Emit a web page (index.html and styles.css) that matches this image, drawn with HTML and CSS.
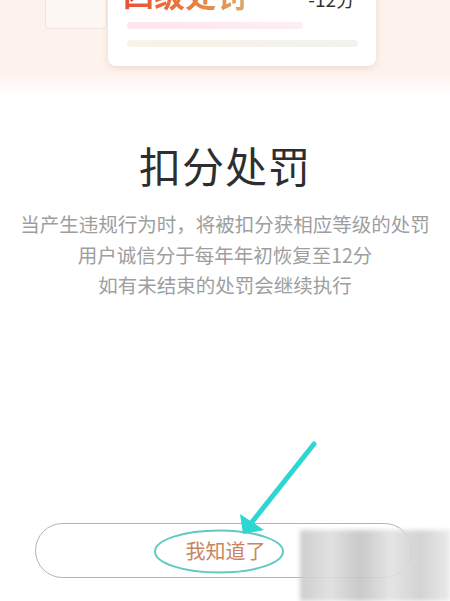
FILE: index.html
```html
<!DOCTYPE html>
<html lang="zh">
<head>
<meta charset="utf-8">
<link rel="stylesheet" href="styles.css">
</head>
<body>
<div class="page">
  <div class="top">
    <div class="ghost"></div>
    <div class="card">
      <div class="card-head">
        <span class="level">四级处罚</span>
        <span class="points">-12分</span>
      </div>
      <div class="bar bar-pink"></div>
      <div class="bar bar-light"></div>
    </div>
  </div>
  <div class="main">
    <h1 class="title">扣分处罚</h1>
    <div class="desc">
      <p>当产生违规行为时，将被扣分获相应等级的处罚</p>
      <p>用户诚信分于每年年初恢复至12分</p>
      <p>如有未结束的处罚会继续执行</p>
    </div>
    <div class="btn-row">
      <button class="btn">我知道了</button>
    </div>
  </div>
  <svg class="annot" width="450" height="601" viewBox="0 0 450 601">
    <ellipse cx="219" cy="551.5" rx="64" ry="21" fill="none" stroke="#62c8c2" stroke-width="2"/>
    <line x1="314" y1="444" x2="252" y2="522" stroke="#2ed6d2" stroke-width="5" stroke-linecap="round"/>
    <polygon points="243,534 240,514 264,530" fill="#2ed6d2"/>
  </svg>
  <div class="wm"></div>
</div>
</body>
</html>
```

FILE: styles.css
```css
html, body {
  margin: 0;
  padding: 0;
  background: #fff;
}
body {
  font-family: "Noto Sans CJK SC", "Noto Sans", sans-serif;
}
.page {
  position: relative;
  width: 450px;
  height: 601px;
  overflow: hidden;
}
.top {
  position: relative;
  display: flex;
  align-items: flex-start;
  height: 100px;
  background: linear-gradient(#fdf3ec 0, #fdf3ec 72%, #fffafa 88%, #fff 100%);
  padding-left: 108px;
  box-sizing: border-box;
}
.ghost {
  position: absolute;
  left: 45px;
  top: -10px;
  width: 60px;
  height: 37px;
  border: 1px solid #f0e6df;
  border-radius: 4px;
  background: #fdf7f3;
}
.card {
  position: relative;
  width: 268px;
  height: 92px;
  margin-top: -26px;
  background: #fff;
  border-radius: 8px;
  box-shadow: 0 2px 6px rgba(210, 170, 150, 0.35);
  padding: 0 18px 0 19px;
  box-sizing: border-box;
  display: flex;
  flex-direction: column;
}
.card-head {
  display: flex;
  justify-content: space-between;
  align-items: baseline;
  height: 40px;
  line-height: 40px;
}
.level {
  font-size: 31px;
  font-weight: 700;
  background: linear-gradient(90deg, #e6503a, #ea7d3c 55%, #dca86a);
  -webkit-background-clip: text;
  background-clip: text;
  color: transparent;
  margin-left: -4px;
}
.points {
  font-size: 19px;
  color: #333;
  margin-right: 3px;
}
.bar {
  height: 7px;
  border-radius: 3px;
}
.bar-pink {
  width: 176px;
  margin-top: 8px;
  background: linear-gradient(90deg, #fde6ec, #fdeef2);
}
.bar-light {
  width: 231px;
  margin-top: 11px;
  background: linear-gradient(90deg, #f6f3e8, #f4f2ee);
}
.main {
  display: flex;
  flex-direction: column;
  align-items: center;
}
.title {
  margin: 40px 0 0;
  font-size: 42px;
  line-height: 50px;
  font-weight: 400;
  color: #2e2e2e;
  letter-spacing: 1px;
}
.desc {
  margin-top: 19px;
  text-align: center;
  color: #9e9e9e;
  font-size: 19.5px;
  line-height: 30.5px;
}
.desc p {
  margin: 0;
}
.btn-row {
  align-self: stretch;
  padding-left: 35px;
  margin-top: 222px;
}
.btn {
  width: 377px;
  height: 55px;
  border: 1.5px solid #b3b3b3;
  border-radius: 28px;
  background: #fff;
  font-family: "Noto Sans CJK SC", sans-serif;
  font-size: 20px;
  color: #c98560;
  padding: 0 0 0 4px;
  display: flex;
  align-items: center;
  justify-content: center;
  box-sizing: border-box;
}
.annot {
  position: absolute;
  left: 0;
  top: 0;
  pointer-events: none;
}
.wm {
  position: absolute;
  left: 300px;
  top: 530px;
  width: 150px;
  height: 71px;
  background:
    linear-gradient(90deg, #c9c9c9 0, #dedede 20%, #c4c4c4 40%, #e2e2e2 60%, #cfcfcf 80%, #e8e8e8 100%);
  opacity: 0.9;
  filter: blur(2px);
}
```
